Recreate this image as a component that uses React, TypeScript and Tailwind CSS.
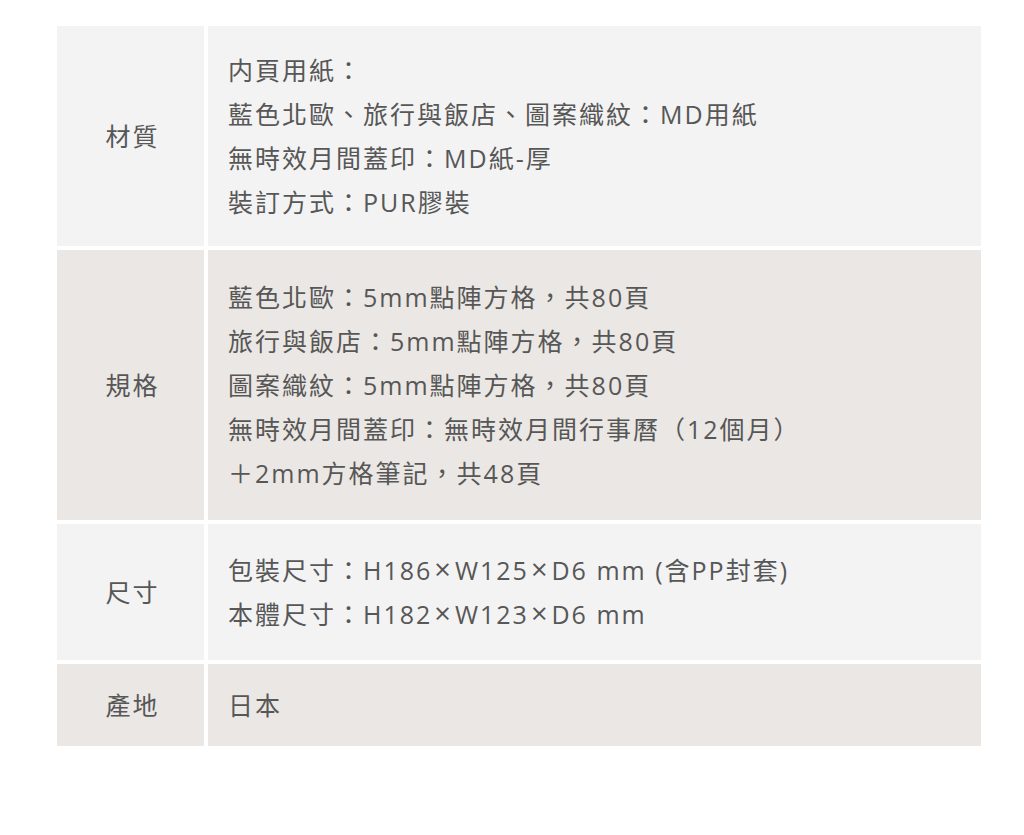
import type { ReactNode } from "react";

const X = () => <span className="mx-[2px] text-[29px] leading-none">×</span>;

const rows: { label: string; bg: string; pad: string; lines: ReactNode[] }[] = [
  {
    label: "材質",
    bg: "bg-[#f3f3f3]",
    pad: "py-[22px]",
    lines: [
      "内頁用紙：",
      "藍色北歐、旅行與飯店、圖案織紋：MD用紙",
      "無時效月間蓋印：MD紙-厚",
      "裝訂方式：PUR膠裝",
    ],
  },
  {
    label: "規格",
    bg: "bg-[#ebe7e4]",
    pad: "py-[25px]",
    lines: [
      "藍色北歐：5mm點陣方格，共80頁",
      "旅行與飯店：5mm點陣方格，共80頁",
      "圖案織紋：5mm點陣方格，共80頁",
      "無時效月間蓋印：無時效月間行事曆（12個月）",
      "＋2mm方格筆記，共48頁",
    ],
  },
  {
    label: "尺寸",
    bg: "bg-[#f3f3f3]",
    pad: "py-[24px]",
    lines: [
      <>包裝尺寸：H186<X />W125<X />D6 mm (含PP封套)</>,
      <>本體尺寸：H182<X />W123<X />D6 mm</>,
    ],
  },
  {
    label: "產地",
    bg: "bg-[#ebe7e4]",
    pad: "py-[19px]",
    lines: ["日本"],
  },
];

export default function App() {
  return (
    <div className="min-h-screen bg-white pt-[26px] pl-[57px] font-['Open_Sans','Noto_Sans_CJK_TC',sans-serif] text-[#575757]">
      <div className="w-[924px] grid grid-cols-[147px_1fr] gap-x-[4px] gap-y-[4px] text-[25px] leading-[44px] tracking-[2px]">
        {rows.map((row) => (
          <div key={row.label} className="contents">
            <div className={`${row.bg} flex items-center justify-center pl-[4px]`}>{row.label}</div>
            <div className={`${row.bg} ${row.pad} pl-[20px]`}>
              {row.lines.map((line, i) => (
                <div key={i}>{line}</div>
              ))}
            </div>
          </div>
        ))}
      </div>
    </div>
  );
}
